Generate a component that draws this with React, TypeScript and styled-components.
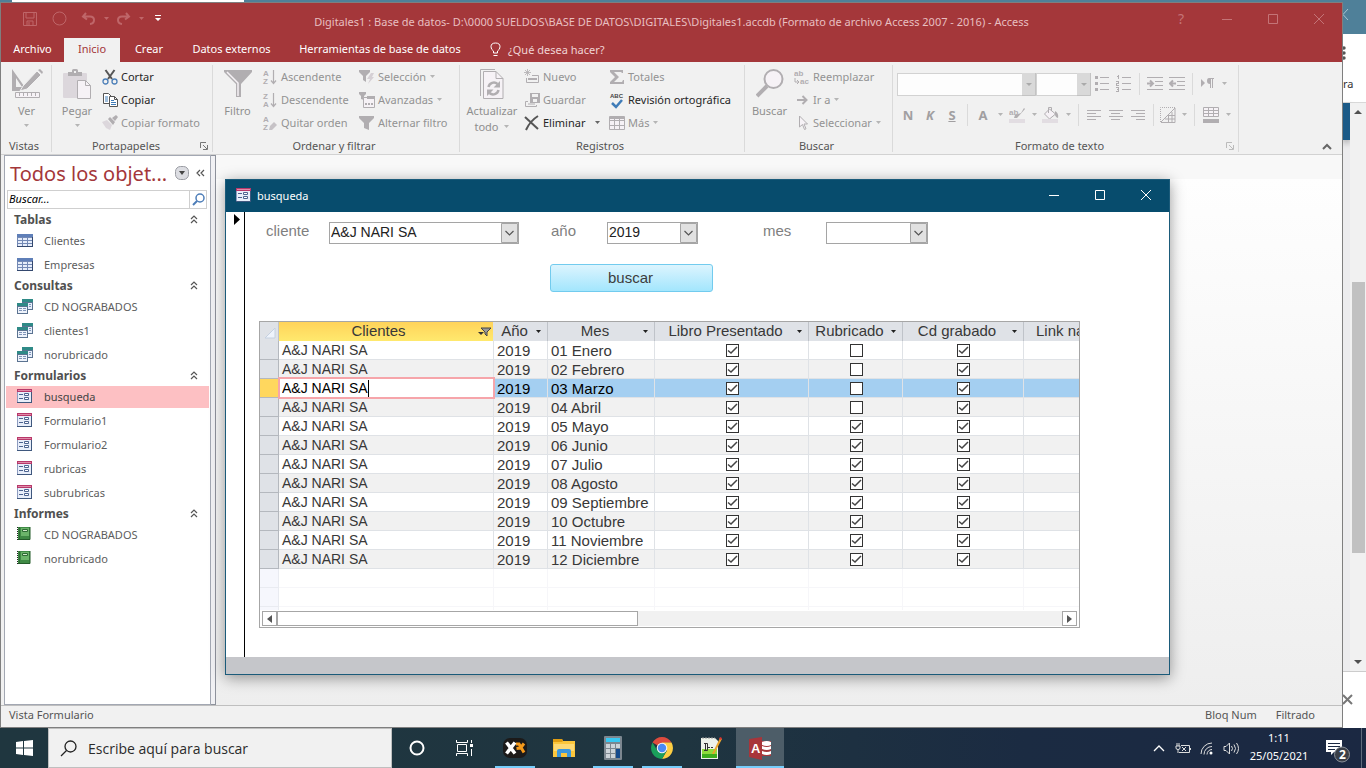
import React from "react";
import styled, { createGlobalStyle, css } from "styled-components";

const ui = '"Noto Sans", "Open Sans", sans-serif';
const arial = '"Liberation Sans", Arial, sans-serif';
const RED = "#a4373a";
const G = "#b1aeb1";

const Global = createGlobalStyle`
  *, *::before, *::after { box-sizing: border-box; }
  body { margin: 0; font-family: ${ui}; font-size: 11px; color: #262626; background: #f0f0f0; }
  button, input, select { font: inherit; color: inherit; margin: 0; padding: 0; border: 0; border-radius: 0; background: none; }
  svg { display: block; flex: none; }
  h2, ul { margin: 0; padding: 0; list-style: none; }
`;

/* ---------- shell ---------- */
const Screen = styled.div`
  min-height: 100vh;
  display: flex;
  flex-direction: column;
  overflow: hidden;
`;
const Upper = styled.div`
  flex: 1;
  display: flex;
`;
const Front = styled.div`
  flex: 1;
  min-width: 0;
  display: flex;
  flex-direction: column;
`;
const TabSliver = styled.div`
  height: 2px;
  background: #4f8099;
  padding-left: 12px;
  &::before {
    content: "";
    display: block;
    width: 232px;
    height: 2px;
    background: #fff;
  }
`;
const AccessWindow = styled.main`
  flex: 1;
  display: flex;
  flex-direction: column;
  border: 1px solid #7f7f7f;
  background: #f1f1f1;
`;
const Header = styled.header`
  background: ${RED};
  color: #fff;
`;
const TitleRow = styled.div`
  height: 35px;
  display: grid;
  grid-template-columns: 1fr auto 1fr;
  color: #c47477;
`;
const Quick = styled.div`
  display: flex;
  align-items: center;
  height: 31px;
  padding-left: 14px;
`;
const QuickButton = styled.button<{ $w: number; $bright?: boolean }>`
  width: ${(p) => p.$w}px;
  height: 24px;
  display: flex;
  align-items: center;
  justify-content: center;
  color: ${(p) => (p.$bright ? "#fff" : "#bf6669")};
`;
const Title = styled.div`
  line-height: 38px;
  color: #e8bfc0;
  white-space: nowrap;
`;
const Controls = styled.div`
  display: flex;
  justify-content: flex-end;
`;
const WinButton = styled.button`
  width: 46px;
  height: 31px;
  display: flex;
  align-items: center;
  justify-content: center;
  font-size: 14px;
`;
const Tabs = styled.nav`
  height: 24px;
  display: flex;
`;
const Tab = styled.button<{ $w: number; $active?: boolean }>`
  width: ${(p) => p.$w}px;
  padding-bottom: 2px;
  white-space: nowrap;
  line-height: 22px;
  ${(p) => p.$active && css`background: #f1f1f1; color: ${RED};`}
`;
const TellMe = styled.button`
  display: flex;
  align-items: center;
  gap: 7px;
  padding: 0 0 2px 15px;
  color: #f0d4d5;
`;

/* ---------- ribbon ---------- */
const Ribbon = styled.div`
  height: 93px;
  display: flex;
  border-bottom: 1px solid #d2d2d2;
  padding: 3px 0 2px;
`;
const Group = styled.section<{ $w: number }>`
  width: ${(p) => p.$w}px;
  flex: none;
  border-right: 1px solid #dadada;
  display: flex;
  flex-direction: column;
  justify-content: space-between;
`;
const GroupBody = styled.div`
  display: flex;
  height: 70px;
`;
const GroupFoot = styled.div`
  display: flex;
  align-items: center;
  height: 12px;
  line-height: 12px;
  padding-right: 4px;
  color: #555;
  span { flex: 1; text-align: center; white-space: nowrap; }
`;
const Large = styled.button<{ $w: number }>`
  width: ${(p) => p.$w}px;
  flex: none;
  display: flex;
  flex-direction: column;
  align-items: center;
  justify-content: flex-start;
  padding-top: 4px;
  color: #8f8f8f;
  line-height: 16px;
  > svg:first-child { margin-bottom: 4px; }
  > svg:not(:first-child) { margin-top: 5px; }
`;
const LargeLine = styled.span`
  display: flex;
  align-items: center;
  gap: 4px;
  white-space: nowrap;
`;
const Column = styled.div<{ $w: number }>`
  width: ${(p) => p.$w}px;
  flex: none;
`;
const Small = styled.button<{ $on?: boolean }>`
  display: flex;
  align-items: center;
  height: 23px;
  gap: 3px;
  white-space: nowrap;
  color: ${(p) => (p.$on ? "#262626" : "#939393")};
  > svg { margin-left: ${(p) => (p.$on ? 6 : 0)}px; }
`;
const IconSlot = styled.span`
  width: 16px;
  display: flex;
  justify-content: center;
`;
const Format = styled.div`
  padding: 6px 0 0 4px;
`;
const FormatRow = styled.div<{ $h: number }>`
  display: flex;
  align-items: center;
  height: ${(p) => p.$h}px;
`;
const Tool = styled.button<{ $w: number }>`
  width: ${(p) => p.$w}px;
  height: 22px;
  flex: none;
  display: flex;
  align-items: center;
  justify-content: center;
  padding-bottom: 1px;
  color: #a19fa1;
  font-size: 13px;
  font-weight: 700;
`;
const Sep = styled.span<{ $w: number }>`
  width: ${(p) => p.$w}px;
  height: 22px;
  display: flex;
  justify-content: center;
  &::before { content: ""; width: 1px; background: #dadada; }
`;
const Stack = styled.span<{ $w: number }>`
  width: ${(p) => p.$w}px;
  flex: none;
  display: grid;
  select, svg { grid-area: 1 / 1; }
  svg { justify-self: end; pointer-events: none; }
`;
const FontSelect = styled.select`
  appearance: none;
  width: 100%;
  height: 23px;
  background: #fdfdfd;
  border: 1px solid #d2d2d2;
`;
const Spring = styled.div`
  flex: 1;
  display: flex;
  align-items: flex-end;
  justify-content: flex-end;
  padding: 0 10px 1px 0;
`;

/* ---------- navigation pane ---------- */
const Body = styled.div`
  flex: 1;
  display: flex;
`;
const Pane = styled.aside`
  width: 207px;
  flex: none;
  margin-left: 3px;
  background: #fff;
  border: 1px solid #a3a8b3;
`;
const Splitter = styled.div`
  width: 5px;
  flex: none;
  border: 1px solid #8e929c;
  border-left: 0;
  background: #f1f1f4;
`;
const PaneHead = styled.div`
  height: 34px;
  display: flex;
  align-items: center;
  padding-left: 5px;
  color: ${RED};
  white-space: nowrap;
  h2 { flex: 1; font-size: 20px; font-weight: 400; }
  button { width: 19px; display: flex; justify-content: center; }
`;
const SearchBox = styled.div`
  margin: 0 3px 2px 2px;
  height: 19px;
  display: flex;
  border: 1px solid #cfcfcf;
  input {
    flex: 1;
    min-width: 0;
    padding: 0 0 2px 1px;
    font-style: italic;
    color: #000;
  }
  input::placeholder { color: #000; opacity: 1; }
  button { width: 17px; border-left: 1px solid #cfcfcf; display: flex; align-items: center; justify-content: center; }
`;
const NavHead = styled.button`
  width: 100%;
  height: 18px;
  display: flex;
  align-items: center;
  justify-content: space-between;
  padding: 0 12px 1px 9px;
  font-size: 12px;
  font-weight: 700;
  color: #505050;
`;
const NavItem = styled.li<{ $on?: boolean }>`
  height: 24px;
  padding: 1px;
  a {
    display: flex;
    align-items: center;
    gap: 10px;
    height: 22px;
    padding: 0 0 2px 11px;
    text-decoration: none;
    color: ${(p) => (p.$on ? "#444" : "#5d5d5d")};
    background: ${(p) => (p.$on ? "#fdc0c3" : "none")};
  }
  span { width: 17px; display: flex; }
`;

/* ---------- workspace and form window ---------- */
const Workspace = styled.div`
  flex: 1;
  min-width: 0;
  border-top: 24px solid #f8f8f8;
  background: linear-gradient(#fefefe, #eeeeee);
`;
const FormWindow = styled.section`
  margin: 0 172px 30px 9px;
  border: 1px solid #1b5b7a;
  background: #fff;
  box-shadow: 0 3px 14px rgba(0, 0, 0, 0.4);
`;
const FormTitle = styled.div`
  height: 32px;
  display: flex;
  align-items: center;
  padding: 0 0 2px 10px;
  background: #074c6d;
  color: #fff;
  > span { flex: 1; padding-left: 5px; }
`;
const FormBody = styled.div`
  display: flex;
  height: 445px;
`;
const RecordBar = styled.div`
  width: 19px;
  border-right: 1px solid #000;
  padding: 2px 0 0 8px;
`;
const FormArea = styled.form`
  flex: 1;
  min-width: 0;
  padding: 10px 89px 0 14px;
  font-family: ${arial};
  font-size: 15px;
`;
const Fields = styled.div`
  display: flex;
  padding-left: 7px;
  height: 22px;
  label { color: #7f7f7f; line-height: 18px; }
`;
const FieldLabel = styled.label<{ $w: number }>`
  width: ${(p) => p.$w}px;
  flex: none;
`;
const Combo = styled.select`
  appearance: none;
  width: 100%;
  height: 22px;
  padding: 0 18px 3px 1px;
  border: 1px solid #a5a5a5;
  background: #fff;
  color: #222;
  font-size: 14px;
`;
const Gap = styled.span<{ $w: number }>`
  width: ${(p) => p.$w}px;
  flex: 0 1 auto;
`;
const SearchButton = styled.button`
  display: block;
  width: 163px;
  height: 28px;
  margin: 20px 0 29px 291px;
  padding: 0 2px 2px 0;
  border: 1px solid #72cbee;
  border-radius: 3px;
  background: linear-gradient(#dcf4fe, #a3e6fd);
  color: #3c3c3c;
`;
const Sheet = styled.div`
  border: 1px solid #a6a6a6;
  height: 307px;
  display: flex;
  flex-direction: column;
`;
const SheetView = styled.div`
  height: 288px;
  overflow: hidden;
`;
const Table = styled.table`
  table-layout: fixed;
  width: 900px;
  border-collapse: separate;
  border-spacing: 0;
  color: #383838;
`;
const HeadCell = styled.th<{ $sel?: boolean }>`
  height: 19px;
  padding: 0;
  font-weight: 400;
  background: ${(p) => (p.$sel ? "linear-gradient(#ffd35a, #ffe96e)" : "#dfe2e7")};
  border-right: 1px solid ${(p) => (p.$sel ? "#dfe2e7" : "#bfc3c9")};
`;
const HeadInner = styled.div<{ $left?: boolean; $sel?: boolean }>`
  display: flex;
  align-items: center;
  height: 19px;
  line-height: 17px;
  padding-right: ${(p) => (p.$sel ? 2 : 5)}px;
  span {
    flex: 1;
    text-align: ${(p) => (p.$left ? "left" : "center")};
    padding: 0 0 2px ${(p) => (p.$left ? 12 : 0)}px;
    white-space: nowrap;
  }
`;
const Row = styled.tr<{ $kind: "odd" | "even" | "on" | "void" }>`
  background: ${(p) => ({ odd: "#fff", even: "#f1f1f1", on: "#a4cff1", void: "#fff" })[p.$kind]};
  color: ${(p) => (p.$kind === "on" ? "#000" : "#383838")};
  td {
    height: 19px;
    padding: 1px 2px 0 3px;
    line-height: 17px;
    white-space: nowrap;
    border-right: 1px solid ${(p) => (p.$kind === "void" ? "#f6f6f9" : "#dfe2e6")};
    border-bottom: 1px solid ${(p) => (p.$kind === "void" ? "#f6f6f9" : "#dfe2e6")};
  }
  td:nth-child(2) { font-size: 14px; }
  td:first-child {
    background: ${(p) => ({ odd: "#dfe2e7", even: "#dfe2e7", on: "#ffd75e", void: "#f6f7fd" })[p.$kind]};
    border-color: ${(p) => (p.$kind === "void" ? "#e9ebf1" : "#b4b8be")};
  }
`;
const Edit = styled.div`
  height: 22px;
  margin: -3px -4px -2px -4px;
  border: 2px solid #f6a5aa;
  background: #fff;
  display: flex;
  align-items: center;
  padding-left: 2px;
  position: relative;
  input { field-sizing: content; line-height: 17px; height: 17px; outline: none; }
  &::after { content: ""; width: 1px; height: 17px; background: #000; }
`;
const Tick = styled.span`
  display: grid;
  width: 13px;
  height: 13px;
  margin: 0 auto;
  input { grid-area: 1 / 1; appearance: none; width: 13px; height: 13px; border: 1px solid #333; background: #fff; }
  svg { grid-area: 1 / 1; pointer-events: none; z-index: 1; }
`;
const HScroll = styled.div`
  flex: 1;
  display: flex;
  padding: 1px 2px;
  button { width: 15px; height: 15px; border: 1px solid #a6a6a6; background: #fff; display: flex; align-items: center; justify-content: center; }
`;
const HTrack = styled.div`
  flex: 1;
  height: 15px;
  background: #f1f1f1;
  &::before { content: ""; display: block; width: 46%; height: 15px; background: #fff; border: 1px solid #a6a6a6; }
`;
const FormFoot = styled.div`
  height: 17px;
  background: #c5c6ca;
`;
const Status = styled.footer`
  height: 22px;
  display: flex;
  align-items: center;
  gap: 19px;
  padding: 0 27px 4px 8px;
  border-top: 1px solid #bfbfbf;
  color: #555;
  span:first-child { flex: 1; }
`;

/* ---------- browser behind, at the right ---------- */
const Behind = styled.aside`
  width: 23px;
  flex: none;
  display: flex;
  flex-direction: column;
  overflow: hidden;
  background: #fff;
  color: #333;
`;
const BehindTop = styled.div`
  height: 34px;
  background: #4f8099;
  padding-top: 9px;
`;
const BehindBar = styled.div`
  height: 69px;
  border-bottom: 1px solid #d8d8d8;
  padding-top: 12px;
  line-height: 16px;
  svg { margin-bottom: 16px; }
`;
const BehindPage = styled.div`
  flex: 1;
  display: flex;
  background: #ececee;
  border-bottom: 1px solid #ccc;
`;
const BehindBlue = styled.div`
  width: 7px;
  height: 37px;
  background: #1b5a87;
  box-shadow: 0 3px 6px rgba(0, 0, 0, 0.3);
`;
const VScroll = styled.div`
  flex: 1;
  background: #f1f1f1;
  display: flex;
  flex-direction: column;
  align-items: center;
  justify-content: space-between;
  padding: 7px 0;
`;
const VThumb = styled.div`
  width: 13px;
  height: 271px;
  margin-top: 60px;
  background: #c1c1c1;
`;
const BehindFoot = styled.div`
  height: 56px;
  padding-top: 22px;
`;

/* ---------- taskbar ---------- */
const Taskbar = styled.footer`
  height: 40px;
  display: flex;
  background: linear-gradient(90deg, #1f363f, #1f3540 50%, #1b2b42 75%, #1b2842);
  color: #fff;
`;
const TaskButton = styled.button<{ $run?: boolean; $on?: boolean }>`
  width: 48px;
  height: 40px;
  flex: none;
  display: flex;
  align-items: center;
  justify-content: center;
  background: ${(p) => (p.$on ? "#4d5d68" : "none")};
  ${(p) => p.$run && css`
    background-image: linear-gradient(#76cdfb, #76cdfb);
    background-size: ${p.$on ? 48 : 40}px 2px;
    background-repeat: no-repeat;
    background-position: center bottom;
  `}
`;
const TaskSearch = styled.label`
  width: 344px;
  display: flex;
  align-items: center;
  gap: 11px;
  padding-left: 11px;
  border: 1px solid #bfbfbf;
  background: #f1f1f1;
  color: #2b2b2b;
  input { flex: 1; min-width: 0; font-family: "Open Sans", sans-serif; font-size: 14px; }
  input::placeholder { color: #2b2b2b; opacity: 1; }
`;
const Apps = styled.div`
  display: flex;
  gap: 1px;
  padding-left: 1px;
`;
const Tray = styled.div`
  flex: 1;
  display: flex;
  align-items: center;
  justify-content: flex-end;
`;
const TrayButton = styled.button`
  width: 24px;
  height: 40px;
  display: flex;
  align-items: center;
  justify-content: center;
`;
const Clock = styled.button`
  width: 72px;
  line-height: 18px;
  padding-bottom: 2px;
  text-align: center;
`;
const Notice = styled.button`
  width: 46px;
  height: 40px;
  display: flex;
  align-items: center;
  justify-content: center;
  padding-top: 6px;
`;
const ShowDesktop = styled.button`
  width: 5px;
  height: 40px;
  border-left: 1px solid #5f6b7c;
`;

/* ---------- icons ---------- */
const Caret = ({ c = "#b5b5b5" }: { c?: string }) => (
  <svg width="7" height="4" viewBox="0 0 7 4"><path d="M1 0h5L3.500 3z" fill={c} /></svg>
);
const WinGlyph = ({ kind }: { kind: "min" | "max" | "close" }) => (
  <svg width="12" height="12" viewBox="0 0 12 12" fill="none" stroke="currentColor">
    {kind === "min" && <path d="M1 6.500h10" />}
    {kind === "max" && <path d="M1.500 1.500h9v9h-9z" />}
    {kind === "close" && <path d="M1 1l10 10M11 1L1 11" />}
  </svg>
);
const VerIcon = () => (
  <svg width="32" height="30" viewBox="0 0 32 30">
    <path d="M1 0v22h8l4-5z M5 9v9h6z" fill={G} fillRule="evenodd" />
    <path d="M12 17L26 2l4 4L16 20l-7 2z" fill={G} stroke="#f1f1f1" />
    <path d="M27 1l2-1 3 3-1 2z" fill={G} />
    <path d="M4.500 23.500h24v5h-24z" fill="#f6f2f6" stroke={G} />
    <path d="M8.500 24v3M12.500 24v3M16.500 24v3M20.500 24v3M24.500 24v3" stroke={G} />
  </svg>
);
const PasteIcon = () => (
  <svg width="28" height="30" viewBox="0 0 28 30">
    <rect x="0" y="4" width="24" height="25" rx="1" fill="#dcd7dc" />
    <path d="M5 3h4V1.500Q9 0 10.500 0h3Q15 0 15 1.500V3h4v4H5z" fill={G} />
    <rect x="11" y="2" width="2" height="2" fill="#f1f1f1" />
    <path d="M14.500 11.500h8l5 5v13h-13z" fill="#f6f2f6" stroke={G} />
    <path d="M22.500 11.500v5h5" fill="none" stroke={G} />
  </svg>
);
const CutIcon = () => (
  <svg width="16" height="16" viewBox="0 0 16 16" fill="none">
    <path d="M3.500 1L10 10M12.500 1L6 10" stroke="#555" strokeWidth="2" />
    <circle cx="3.500" cy="12.500" r="2.500" stroke="#4c7fb8" strokeWidth="1.300" />
    <circle cx="12.500" cy="12.500" r="2.500" stroke="#4c7fb8" strokeWidth="1.300" />
  </svg>
);
const CopyIcon = () => (
  <svg width="16" height="16" viewBox="0 0 16 16" fill="#fff" stroke="#555">
    <path d="M1.500 1.500h5l3 3v7h-8z" />
    <path d="M3 5h3M3 7h3M3 9h3" stroke="#3f7cb8" />
    <path d="M7.500 4.500h5l3 3v7h-8z" />
    <path d="M12.500 4.500v3h3" fill="none" />
    <path d="M9 8.500h3M9 10.500h5M9 12.500h5" stroke="#3f7cb8" />
  </svg>
);
const BrushIcon = () => (
  <svg width="16" height="16" viewBox="0 0 16 16">
    <path d="M0 7l5-2 5 5-2 5-4-2z" fill="#dcd7dc" />
    <path d="M6 4l2-2 5 5-2 3z" fill={G} />
    <path d="M10 3l4-3 2 2-3 4z" fill={G} />
  </svg>
);
const Funnel = ({ big }: { big?: boolean }) =>
  big ? (
    <svg width="28" height="30" viewBox="0 0 28 30">
      <path d="M0 1h28v2L17 15v13h-5V15L0 3z" fill={G} />
      <path d="M3 3l11 11v13" stroke="#f6f2f6" fill="none" strokeWidth="1.500" />
    </svg>
  ) : (
    <svg width="16" height="16" viewBox="0 0 16 16"><path d="M0 1h15v2L10 8v7l-5-2V8L0 3z" fill={G} /></svg>
  );
const SortIcon = ({ a, b, clear }: { a: string; b: string; clear?: boolean }) => (
  <svg width="16" height="18" viewBox="0 0 16 18">
    <text x="1" y="8" fontSize="8" fontWeight="700" fontFamily="Liberation Sans" fill={G}>{a}</text>
    <text x="1" y="16" fontSize="8" fontWeight="700" fontFamily="Liberation Sans" fill={G}>{b}</text>
    {clear ? (
      <path d="M7 16l1-4 4-4 3 3-5 5z" fill="#c6c2c6" />
    ) : (
      <path d="M11.500 2v13M9 12.500l2.500 3 2.500-3" stroke={G} strokeWidth="1.200" fill="none" />
    )}
  </svg>
);
const SelectionIcon = () => (
  <svg width="16" height="16" viewBox="0 0 16 16">
    <path d="M0 1h11v2L7 7v6l-3-2V7L0 3z" fill={G} />
    <path d="M12 4h3l-2 4h2l-6 7 2-5H8z" fill="#d5d0d5" />
  </svg>
);
const AdvancedIcon = () => (
  <svg width="16" height="16" viewBox="0 0 16 16">
    <path d="M0 0h7v2L5 4v4L2 7V4L0 2z" fill={G} />
    <path d="M4.500 5.500h11v10h-11z" fill="#f6f2f6" stroke={G} />
    <path d="M8 4h8v3H8z" fill={G} />
    <path d="M6 11h2v2H6zM9 11h2v2H9zM12 11h2v2h-2z" fill={G} />
  </svg>
);
const RefreshIcon = () => (
  <svg width="26" height="30" viewBox="0 0 26 30" fill="none" stroke={G}>
    <path d="M1.500 27V.500H16" />
    <path d="M4.500 2.500H17l7 7v20H4.500z" fill="#f6f2f6" />
    <path d="M17 2.500v7h7" />
    <path d="M9.500 18a5.500 5.500 0 0 1 9-3M19.500 21a5.500 5.500 0 0 1-9 3" strokeWidth="2.500" />
    <path d="M21 12v6.500h-6.500zM8 27v-6.500h6.500z" fill={G} stroke="none" />
  </svg>
);
const NewIcon = () => (
  <svg width="16" height="16" viewBox="0 0 16 16" stroke={G} fill="none">
    <path d="M3.500 0v7M0 3.500h7M1 1l5 5M6 1L1 6" strokeWidth=".8" />
    <path d="M8 6.500h6.500v7h-12V9" /><path d="M4 10h9" strokeWidth="2" />
  </svg>
);
const SaveIcon = () => (
  <svg width="16" height="16" viewBox="0 0 16 16">
    <path d="M6 1h10v10H6z" fill={G} /><path d="M8 2h6v3H8zM9 7h4v3H9z" fill="#f1f1f1" />
    <path d="M4 9.500H1.500v5h11V13M4 12h7" stroke={G} fill="none" />
  </svg>
);
const DeleteIcon = () => (
  <svg width="16" height="16" viewBox="0 0 16 16" fill="none" stroke="#555">
    <path d="M1 2l13 12" strokeWidth="2" /><path d="M14 1Q6 6 2 15" strokeWidth="2" />
  </svg>
);
const SumIcon = () => (
  <svg width="16" height="16" viewBox="0 0 16 16"><path d="M1 1h13v3h-1l-1-1H5l5 5-5 5h8l1-2h1v4H1v-2l5-5-5-5z" fill={G} /></svg>
);
const SpellIcon = () => (
  <svg width="16" height="18" viewBox="0 0 16 18">
    <text x="1" y="7" fontSize="6" fontWeight="700" fontFamily="Liberation Sans" fill="#444">ABC</text>
    <path d="M3 12l4 4 6-7" fill="none" stroke="#3f7cb8" strokeWidth="2.500" />
  </svg>
);
const MoreIcon = () => (
  <svg width="16" height="16" viewBox="0 0 16 16" fill="#f6f2f6" stroke={G}>
    <path d="M.500 1.500h15v13H.500zM.500 5.500h15v5H.500zM5.500 1.500v13M10.500 1.500v13" />
    <path d="M1 2h14v2H1z" fill={G} stroke="none" />
  </svg>
);
const FindIcon = () => (
  <svg width="28" height="30" viewBox="0 0 28 30" fill="none" stroke={G}>
    <circle cx="17.500" cy="10" r="9" strokeWidth="2" fill="#f6f2f6" /><path d="M11 17L1 27" strokeWidth="4" />
  </svg>
);
const ReplaceIcon = () => (
  <svg width="16" height="18" viewBox="0 0 16 18" fontFamily="Liberation Sans" fontWeight="700" fontSize="8">
    <text x="0" y="8" fill={G}>ab</text><text x="6" y="16" fill={G}>ac</text>
    <path d="M1 10v4h3M3 12l2 2-2 2" stroke={G} fill="none" />
  </svg>
);
const GoIcon = () => (
  <svg width="16" height="16" viewBox="0 0 16 16" fill="none" stroke={G} strokeWidth="2"><path d="M3 8h9M8.500 4l4 4-4 4" /></svg>
);
const CursorIcon = () => (
  <svg width="16" height="16" viewBox="0 0 16 16"><path d="M5.500 1v11l3-2.500 2 5 1.500-.7-2-4.800h3.500z" fill="#f6f2f6" stroke={G} /></svg>
);
const LauncherIcon = ({ c = "#777" }: { c?: string }) => (
  <svg width="8" height="8" viewBox="0 0 8 8" fill="none" stroke={c}><path d="M.500 6V.500H6M3 3l4 4M7.500 3v4.500H3" /></svg>
);
const BulletIcon = ({ num }: { num?: boolean }) => (
  <svg width="16" height="17" viewBox="0 0 16 17" fill={G}>
    <path d="M6 2h9v1H6zM6 8h9v1H6zM6 14h9v1H6z" />
    {num ? (
      <path d="M1 1h1V0h1v4H2V2H1zM0 7V6h3v3H1v1h2v1H0V8h2V7zM0 12h3v5H0v-1h2v-1H1v-1h1v-1H0z" />
    ) : (
      <path d="M1 1h3v3H1zM1 7h3v3H1zM1 13h3v3H1z" />
    )}
  </svg>
);
const IndentIcon = ({ out }: { out?: boolean }) => (
  <svg width="16" height="15" viewBox="0 0 16 15" stroke={G} fill="none">
    <path d="M0 1.500h16M8 5.500h8M8 9.500h8M0 13.500h16" />
    <path d={out ? "M7 7.500H1M4 4.500l-3 3 3 3" : "M0 7.500h6M3 4.500l3 3-3 3"} strokeWidth="2" />
  </svg>
);
const ParaIcon = () => (
  <svg width="13" height="11" viewBox="0 0 13 11" fill={G}><path d="M0 1l4 4-4 4zM8 0h5v1h-1v9h-1V1h-1v9H9V6Q6 6 6 3t2-3z" /></svg>
);
const MarkIcon = () => (
  <svg width="16" height="16" viewBox="0 0 16 16">
    <text x="0" y="8" fontSize="8" fontWeight="700" fontFamily="Liberation Sans" fill={G}>ab</text>
    <path d="M15 1l1 1-8 9H5l1-3 6-2z" fill={G} /><path d="M0 12h16v4H0z" fill="#e2dde2" />
  </svg>
);
const BucketIcon = () => (
  <svg width="18" height="16" viewBox="0 0 18 16">
    <path d="M2.500 7l5-5 6 5-6 5z" fill="#f6f2f6" stroke={G} /><path d="M6.500 6V.500h3V4" fill="none" stroke={G} />
    <path d="M13 4q4 2 3 7-3-1-3-4z" fill={G} /><path d="M0 12h16v4H0z" fill="#e2dde2" />
  </svg>
);
const AlignIcon = ({ k }: { k: 0 | 1 | 2 }) => (
  <svg width="14" height="12" viewBox="0 0 14 12" fill={G}>
    <path d="M0 1h14v1H0zM0 7h14v1H0z" /><rect x={[0, 2, 5][k]} y="4" width="9" height="1" /><rect x={[0, 2, 5][k]} y="10" width="9" height="1" />
  </svg>
);
const GridlinesIcon = () => (
  <svg width="16" height="16" viewBox="0 0 16 16" fill="none" stroke={G}>
    <path d="M.500 15V.500H15" strokeDasharray="1 1" /><path d="M1 15L15 1v14.500H1M8.500 8v7M12 5v10M8 8.500h7M5 12h10" />
  </svg>
);
const AltRowIcon = () => (
  <svg width="16" height="16" viewBox="0 0 16 16" fill="#f6f2f6" stroke={G}>
    <path d="M.500.500h15v9H.500zM.500 3.500h15M.500 6.500h15M5.500.500v9M10.500.500v9" /><path d="M0 12h16v4H0z" fill={G} stroke="none" />
  </svg>
);
const FontArrow = () => (
  <svg width="14" height="23" viewBox="0 0 14 23"><path d="M0 0h14v23H0z" fill="#d9d9d9" /><path d="M13.500 0v22.500H0" stroke="#c3c3c3" fill="none" /><path d="M4 10h6l-3 3z" fill="#aaa" /></svg>
);
const ComboArrow = () => (
  <svg width="18" height="22" viewBox="0 0 18 22"><path d="M.500 1.500h16v19H.500z" fill="#e1e1e1" stroke="#a5a5a5" /><path d="M17.500 0v22" stroke="#a5a5a5" /><path d="M4.500 9l4 4 4-4" fill="none" stroke="#555" strokeWidth="1.200" /></svg>
);
const NavTable = () => (
  <svg width="16" height="13" viewBox="0 0 16 13"><rect width="16" height="13" fill="#7389b5" /><path d="M0 0h16v3H0z" fill="#5f7fb8" /><path d="M15 3h1v10H0v-1h15z" fill="#34486e" />
    <path d="M1 4h4v2H1zM6 4h4v2H6zM11 4h4v2h-4zM1 7h4v2H1zM6 7h4v2H6zM11 7h4v2h-4zM1 10h4v2H1zM6 10h4v2H6zM11 10h4v2h-4z" fill="#e6edfa" /></svg>
);
const NavQuery = () => (
  <svg width="16" height="15" viewBox="0 0 16 15">
    <path d="M5 0h11v11H5z" fill="#5b7391" /><path d="M6 4h9v6H6z" fill="#e6eefa" /><path d="M5 0h11v3H5z" fill="#2f8a87" />
    <path d="M12 5h2v1h-2zM12 7h2v1h-2z" fill="#7f94b8" />
    <path d="M0 4h11v11H0z" fill="#5b7391" /><path d="M1 8h9v6H1z" fill="#eef3fb" /><path d="M0 4h11v3H0z" fill="#2f8a87" />
    <path d="M2 9h3v1H2zM6 9h3v1H6zM2 11h3v1H2zM6 11h3v1H6z" fill="#7f94b8" />
  </svg>
);
const NavForm = () => (
  <svg width="16" height="14" viewBox="0 0 16 14"><path d="M0 0h15v14H0z" fill="#3f587e" /><path d="M0 0h14v13H0z" fill="#8d9cc0" /><path d="M1 3h13v10H1z" fill="#e8eefa" /><path d="M0 0h15v3H0z" fill="#b8386a" /><path d="M1 1h13v1H1z" fill="#e08aa8" />
    <path d="M2 5.500h4M2 9.500h4M7.500 4.500h4v2h-4zM7.500 8.500h4v2h-4z" fill="#fff" stroke="#4d6490" /></svg>
);
const NavReport = () => (
  <svg width="16" height="14" viewBox="0 0 16 14"><path d="M1 0h12v13H1z" fill="#3f8a45" /><path d="M4 1h8v8H4z" fill="#6bb56a" /><path d="M5.500 2.500h5v2h-5z" fill="#cfe8c8" stroke="#2e6b35" />
    <path d="M.500 0v13" stroke="#222" strokeDasharray="1 1" /><path d="M2.500 0v13" stroke="#2e6b35" /><path d="M1 12.500h12V0" fill="none" stroke="#245c2a" /></svg>
);
const DoubleUp = () => (
  <svg width="8" height="9" viewBox="0 0 8 9" fill="none" stroke="#555" strokeWidth="1.200"><path d="M1 4l3-3 3 3M1 8l3-3 3 3" /></svg>
);

/* ---------- data ---------- */
const navGroups = [
  { name: "Tablas", icon: NavTable, items: ["Clientes", "Empresas"] },
  { name: "Consultas", icon: NavQuery, items: ["CD NOGRABADOS", "clientes1", "norubricado"] },
  { name: "Formularios", icon: NavForm, items: ["busqueda", "Formulario1", "Formulario2", "rubricas", "subrubricas"] },
  { name: "Informes", icon: NavReport, items: ["CD NOGRABADOS", "norubricado"] },
];
const months = ["Enero", "Febrero", "Marzo", "Abril", "Mayo", "Junio", "Julio", "Agosto", "Septiembre", "Octubre", "Noviembre", "Diciembre"];
const heads = ["Año", "Mes", "Libro Presentado", "Rubricado", "Cd grabado"];
const columnWidths = [19, 215, 54, 107, 154, 94, 121, 136];

const Check = ({ on, label }: { on: boolean; label: string }) => (
  <Tick>
    <input type="checkbox" defaultChecked={on} aria-label={label} />
    {on && <svg width="13" height="13" viewBox="0 0 13 13" fill="none" stroke="#444" strokeWidth="1.500"><path d="M2 6.500L5 9l6-6" /></svg>}
  </Tick>
);
const Cmd = ({ icon, children, on, menu }: { icon: React.ReactNode; children: string; on?: boolean; menu?: boolean }) => (
  <Small $on={on} type="button"><IconSlot>{icon}</IconSlot>{children}{menu && <Caret c={on ? "#666" : undefined} />}</Small>
);

export default function App() {
  return (
    <Screen>
      <Global />
      <Upper>
        <Front>
          <TabSliver />
          <AccessWindow>
            <Header>
              <TitleRow>
                <Quick>
                  <QuickButton $w={30} aria-label="Guardar"><svg width="14" height="14" viewBox="0 0 14 14" fill="none" stroke="currentColor"><path d="M.500.500h13v13H.500zM3 1v5h8V1M4 13V9h6v4M6 10v3" /></svg></QuickButton>
                  <QuickButton $w={29} aria-label="Repetir"><svg width="15" height="15" viewBox="0 0 15 15" fill="none" stroke="currentColor"><circle cx="7.500" cy="7.500" r="6.500" /></svg></QuickButton>
                  <QuickButton $w={28} aria-label="Deshacer"><svg width="14" height="13" viewBox="0 0 14 13" fill="none" stroke="currentColor" strokeWidth="2"><path d="M5 1L2 4.500l4 3M2 4.500h7q4 0 4 3.500t-4 4" /></svg></QuickButton>
                  <QuickButton $w={8} aria-label="Lista deshacer"><Caret c="#bf6669" /></QuickButton>
                  <QuickButton $w={27} aria-label="Rehacer"><svg width="14" height="13" viewBox="0 0 14 13" fill="none" stroke="currentColor" strokeWidth="2"><path d="M9 1l3 3.500-4 3M12 4.500H5Q1 4.500 1 8t4 4" /></svg></QuickButton>
                  <QuickButton $w={8} aria-label="Lista rehacer"><Caret c="#bf6669" /></QuickButton>
                  <QuickButton $w={26} $bright aria-label="Personalizar"><svg width="6" height="7" viewBox="0 0 6 7" fill="currentColor"><path d="M0 0h6v1H0zM0 3h6L3 6z" /></svg></QuickButton>
                </Quick>
                <Title>Digitales1 : Base de datos- D:\0000 SUELDOS\BASE DE DATOS\DIGITALES\Digitales1.accdb (Formato de archivo Access 2007 - 2016) - Access</Title>
                <Controls>
                  <WinButton aria-label="Ayuda">?</WinButton>
                  <WinButton aria-label="Minimizar"><WinGlyph kind="min" /></WinButton>
                  <WinButton aria-label="Maximizar"><WinGlyph kind="max" /></WinButton>
                  <WinButton aria-label="Cerrar"><WinGlyph kind="close" /></WinButton>
                </Controls>
              </TitleRow>
              <Tabs>
                <Tab $w={63}>Archivo</Tab>
                <Tab $w={56} $active>Inicio</Tab>
                <Tab $w={58}>Crear</Tab>
                <Tab $w={107}>Datos externos</Tab>
                <Tab $w={190}>Herramientas de base de datos</Tab>
                <TellMe>
                  <svg width="11" height="15" viewBox="0 0 11 15" fill="none" stroke="#fff"><path d="M3.500 11V9Q1 7.500 1 4.800 1 1 5.500 1T10 4.800Q10 7.500 7.500 9v2zM3.500 13.500h4" /></svg>
                  ¿Qué desea hacer?
                </TellMe>
              </Tabs>
            </Header>

            <Ribbon>
              <Group $w={51}>
                <GroupBody><Large $w={51}><VerIcon />Ver<Caret /></Large></GroupBody>
                <GroupFoot><span>Vistas</span></GroupFoot>
              </Group>
              <Group $w={161}>
                <GroupBody>
                  <Large $w={50}><PasteIcon />Pegar<Caret /></Large>
                  <Column $w={110}>
                    <Cmd on icon={<CutIcon />}>Cortar</Cmd>
                    <Cmd on icon={<CopyIcon />}>Copiar</Cmd>
                    <Cmd icon={<BrushIcon />}>Copiar formato</Cmd>
                  </Column>
                </GroupBody>
                <GroupFoot><span>Portapapeles</span><LauncherIcon /></GroupFoot>
              </Group>
              <Group $w={247}>
                <GroupBody>
                  <Large $w={49}><Funnel big />Filtro</Large>
                  <Column $w={97}>
                    <Cmd icon={<SortIcon a="A" b="Z" />}>Ascendente</Cmd>
                    <Cmd icon={<SortIcon a="Z" b="A" />}>Descendente</Cmd>
                    <Cmd icon={<SortIcon a="A" b="Z" clear />}>Quitar orden</Cmd>
                  </Column>
                  <Column $w={100}>
                    <Cmd menu icon={<SelectionIcon />}>Selección</Cmd>
                    <Cmd menu icon={<AdvancedIcon />}>Avanzadas</Cmd>
                    <Cmd icon={<Funnel />}>Alternar filtro</Cmd>
                  </Column>
                </GroupBody>
                <GroupFoot><span>Ordenar y filtrar</span></GroupFoot>
              </Group>
              <Group $w={285}>
                <GroupBody>
                  <Large $w={64}><RefreshIcon />Actualizar<LargeLine>todo <Caret /></LargeLine></Large>
                  <Column $w={85}>
                    <Cmd icon={<NewIcon />}>Nuevo</Cmd>
                    <Cmd icon={<SaveIcon />}>Guardar</Cmd>
                    <Cmd on menu icon={<DeleteIcon />}>Eliminar</Cmd>
                  </Column>
                  <Column $w={130}>
                    <Cmd icon={<SumIcon />}>Totales</Cmd>
                    <Cmd on icon={<SpellIcon />}>Revisión ortográfica</Cmd>
                    <Cmd menu icon={<MoreIcon />}>Más</Cmd>
                  </Column>
                </GroupBody>
                <GroupFoot><span>Registros</span></GroupFoot>
              </Group>
              <Group $w={148}>
                <GroupBody>
                  <Large $w={49}><FindIcon />Buscar</Large>
                  <Column $w={98}>
                    <Cmd icon={<ReplaceIcon />}>Reemplazar</Cmd>
                    <Cmd menu icon={<GoIcon />}>Ir a</Cmd>
                    <Cmd menu icon={<CursorIcon />}>Seleccionar</Cmd>
                  </Column>
                </GroupBody>
                <GroupFoot><span>Buscar</span></GroupFoot>
              </Group>
              <Group $w={346}>
                <Format>
                  <FormatRow $h={26}>
                    <Stack $w={139}><FontSelect aria-label="Fuente" /><FontArrow /></Stack>
                    <Stack $w={55}><FontSelect aria-label="Tamaño" /><FontArrow /></Stack>
                    <Tool $w={22} aria-label="Viñetas"><BulletIcon /></Tool>
                    <Tool $w={22} aria-label="Numeración"><BulletIcon num /></Tool>
                    <Sep $w={9} />
                    <Tool $w={22} aria-label="Aumentar sangría"><IndentIcon /></Tool>
                    <Tool $w={22} aria-label="Disminuir sangría"><IndentIcon out /></Tool>
                    <Sep $w={9} />
                    <Tool $w={20} aria-label="Dirección"><ParaIcon /></Tool>
                    <Tool $w={14} aria-label="Más direcciones"><Caret /></Tool>
                  </FormatRow>
                  <FormatRow $h={36}>
                    <Tool $w={22}>N</Tool>
                    <Tool $w={22}><i>K</i></Tool>
                    <Tool $w={22}><u>S</u></Tool>
                    <Sep $w={8} />
                    <Tool $w={24}>A</Tool>
                    <Tool $w={10} aria-label="Más colores"><Caret /></Tool>
                    <Tool $w={24} aria-label="Resaltado"><MarkIcon /></Tool>
                    <Tool $w={10} aria-label="Más resaltados"><Caret /></Tool>
                    <Tool $w={24} aria-label="Fondo"><BucketIcon /></Tool>
                    <Tool $w={10} aria-label="Más fondos"><Caret /></Tool>
                    <Sep $w={10} />
                    <Tool $w={22} aria-label="Izquierda"><AlignIcon k={0} /></Tool>
                    <Tool $w={22} aria-label="Centrar"><AlignIcon k={1} /></Tool>
                    <Tool $w={22} aria-label="Derecha"><AlignIcon k={2} /></Tool>
                    <Sep $w={8} />
                    <Tool $w={22} aria-label="Líneas"><GridlinesIcon /></Tool>
                    <Tool $w={10} aria-label="Más líneas"><Caret /></Tool>
                    <Sep $w={10} />
                    <Tool $w={24} aria-label="Color de fila"><AltRowIcon /></Tool>
                    <Tool $w={10} aria-label="Más filas"><Caret /></Tool>
                  </FormatRow>
                </Format>
                <GroupFoot><span>Formato de texto</span><LauncherIcon c="#bbb" /></GroupFoot>
              </Group>
              <Spring>
                <button aria-label="Contraer cinta"><svg width="10" height="8" viewBox="0 0 10 8" fill="none" stroke="#666" strokeWidth="2"><path d="M1 6l4-4 4 4" /></svg></button>
              </Spring>
            </Ribbon>

            <Body>
              <Pane>
                <PaneHead>
                  <h2>Todos los objet...</h2>
                  <button aria-label="Menú"><svg width="14" height="14" viewBox="0 0 14 14"><rect x=".5" y=".5" width="13" height="13" rx="5" fill="#dcdde2" stroke="#9a9ca3" /><path d="M4 5h6l-3 4z" fill="#444" /></svg></button>
                  <button aria-label="Contraer panel"><svg width="9" height="8" viewBox="0 0 9 8" fill="none" stroke="#555" strokeWidth="1.200"><path d="M4 1L1 4l3 3M8 1L5 4l3 3" /></svg></button>
                </PaneHead>
                <SearchBox>
                  <input placeholder="Buscar..." aria-label="Buscar objetos" />
                  <button aria-label="Buscar"><svg width="13" height="13" viewBox="0 0 13 13" fill="none" stroke="#4d7db8"><circle cx="8" cy="5" r="4" strokeWidth="1.500" /><path d="M5 8l-4 4" strokeWidth="2" /></svg></button>
                </SearchBox>
                {navGroups.map(({ name, icon: Icon, items }) => (
                  <section key={name}>
                    <NavHead>{name}<DoubleUp /></NavHead>
                    <ul>
                      {items.map((item) => (
                        <NavItem key={item} $on={item === "busqueda"}><a href="#"><span><Icon /></span>{item}</a></NavItem>
                      ))}
                    </ul>
                  </section>
                ))}
              </Pane>
              <Splitter />
              <Workspace>
                <FormWindow>
                  <FormTitle>
                    <NavForm /><span>busqueda</span>
                    <WinButton aria-label="Minimizar"><WinGlyph kind="min" /></WinButton>
                    <WinButton aria-label="Maximizar"><WinGlyph kind="max" /></WinButton>
                    <WinButton aria-label="Cerrar"><WinGlyph kind="close" /></WinButton>
                  </FormTitle>
                  <FormBody>
                    <RecordBar><svg width="6" height="11" viewBox="0 0 6 11"><path d="M0 0l6 5.500L0 11z" /></svg></RecordBar>
                    <FormArea onSubmit={(e) => e.preventDefault()}>
                      <Fields>
                        <FieldLabel $w={63} htmlFor="cliente">cliente</FieldLabel>
                        <Stack $w={190}><Combo id="cliente"><option>A&amp;J NARI SA</option></Combo><ComboArrow /></Stack>
                        <Gap $w={32} />
                        <FieldLabel $w={56} htmlFor="anio">año</FieldLabel>
                        <Stack $w={91}><Combo id="anio"><option>2019</option></Combo><ComboArrow /></Stack>
                        <Gap $w={65} />
                        <FieldLabel $w={63} htmlFor="mes">mes</FieldLabel>
                        <Stack $w={102}><Combo id="mes"><option></option></Combo><ComboArrow /></Stack>
                      </Fields>
                      <SearchButton>buscar</SearchButton>
                      <Sheet>
                        <SheetView>
                          <Table>
                            <colgroup>{columnWidths.map((w, i) => <col key={i} width={w} />)}</colgroup>
                            <thead>
                              <tr>
                                <HeadCell aria-label="Seleccionar todo"><svg width="18" height="18" viewBox="0 0 18 18"><path d="M15 5v10H5z" fill="#eef3fb" stroke="#c5d0e0" /></svg></HeadCell>
                                <HeadCell $sel><HeadInner $sel><span>Clientes</span><svg width="13" height="10" viewBox="0 0 13 10"><path d="M0 5h6L3 8z" fill="#333" /><path d="M3 1h10L9 5v4L7 7V5z" fill="#999" stroke="#444" /></svg></HeadInner></HeadCell>
                                {heads.map((h) => (
                                  <HeadCell key={h}><HeadInner><span>{h}</span><Caret c="#222" /></HeadInner></HeadCell>
                                ))}
                                <HeadCell><HeadInner $left><span>Link na</span></HeadInner></HeadCell>
                              </tr>
                            </thead>
                            <tbody>
                              {months.map((m, i) => {
                                const n = String(i + 1).padStart(2, "0");
                                return (
                                  <Row key={m} $kind={i === 2 ? "on" : i % 2 ? "even" : "odd"}>
                                    <td />
                                    <td>{i === 2 ? <Edit><input defaultValue="A&J NARI SA" aria-label="Cliente" /></Edit> : "A&J NARI SA"}</td>
                                    <td>2019</td>
                                    <td>{n} {m}</td>
                                    <td><Check on label={`Libro presentado ${m}`} /></td>
                                    <td><Check on={i > 3} label={`Rubricado ${m}`} /></td>
                                    <td><Check on label={`Cd grabado ${m}`} /></td>
                                    <td />
                                  </Row>
                                );
                              })}
                              {[0, 1, 2].map((r) => (
                                <Row key={r} $kind="void">{columnWidths.map((w) => <td key={w} />)}</Row>
                              ))}
                            </tbody>
                          </Table>
                        </SheetView>
                        <HScroll>
                          <button type="button" aria-label="Izquierda"><svg width="5" height="8" viewBox="0 0 5 8"><path d="M5 0v8L0 4z" fill="#555" /></svg></button>
                          <HTrack />
                          <button type="button" aria-label="Derecha"><svg width="5" height="8" viewBox="0 0 5 8"><path d="M0 0v8l5-4z" fill="#555" /></svg></button>
                        </HScroll>
                      </Sheet>
                    </FormArea>
                  </FormBody>
                  <FormFoot />
                </FormWindow>
              </Workspace>
            </Body>
            <Status><span>Vista Formulario</span><span>Bloq Num</span><span>Filtrado</span></Status>
          </AccessWindow>
        </Front>
        <Behind>
          <BehindTop><svg width="6" height="11" viewBox="0 0 6 11" fill="none" stroke="#a9c3cf"><path d="M5 0L0 5.500 5 11" /></svg></BehindTop>
          <BehindBar>
            <svg width="4" height="14" viewBox="0 0 4 14" fill="#555"><circle cx="1" cy="2" r="1.700" /><circle cx="1" cy="7" r="1.700" /><circle cx="1" cy="12" r="1.700" /></svg>
            ra
          </BehindBar>
          <BehindPage>
            <BehindBlue />
            <VScroll>
              <svg width="8" height="4" viewBox="0 0 8 4"><path d="M4 0l4 4H0z" fill="#505050" /></svg>
              <VThumb />
              <svg width="8" height="4" viewBox="0 0 8 4"><path d="M4 4l4-4H0z" fill="#505050" /></svg>
            </VScroll>
          </BehindPage>
          <BehindFoot><svg width="11" height="11" viewBox="0 0 11 11" fill="none" stroke="#777" strokeWidth="2"><path d="M0 1l9 9M9 1l-9 9" /></svg></BehindFoot>
        </Behind>
      </Upper>

      <Taskbar>
        <TaskButton aria-label="Inicio"><svg width="17" height="16" viewBox="0 0 17 16" fill="#fff"><path d="M0 2l7-1v6.500H0zM8 1l9-1v7.500H8zM0 8.500h7V15l-7-1zM8 8.500h9V16l-9-1z" /></svg></TaskButton>
        <TaskSearch>
          <svg width="17" height="17" viewBox="0 0 17 17" fill="none" stroke="#222" strokeWidth="1.300"><circle cx="10.500" cy="6.500" r="5.500" /><path d="M6.500 10.500L1 16" /></svg>
          <input placeholder="Escribe aquí para buscar" />
        </TaskSearch>
        <Apps>
          <TaskButton aria-label="Cortana"><svg width="16" height="16" viewBox="0 0 16 16" fill="none" stroke="#fff" strokeWidth="2"><circle cx="8" cy="8" r="6.500" /></svg></TaskButton>
          <TaskButton aria-label="Vista de tareas"><svg width="20" height="16" viewBox="0 0 20 16" fill="none" stroke="#fff"><path d="M1.500 4.500h9v7h-9zM.500 0v2.500h11V0M.500 16v-2.500h11V16M15.500 0v3M15.500 9v7" /><path d="M14 4h3v3h-3z" fill="#fff" stroke="none" /></svg></TaskButton>
          <TaskButton $run aria-label="XX"><svg width="24" height="20" viewBox="0 0 24 20" fill="none" strokeWidth="3"><rect width="24" height="20" rx="7" fill="#1c1a19" /><path d="M13 6h3l5 8.500M21 5.500l-3.500 4.500-4 .500" stroke="#f59a1b" /><path d="M3.500 4.500l8.500 11M12 4.500l-8.500 11" stroke="#fff" strokeWidth="3.500" /></svg></TaskButton>
          <TaskButton aria-label="Explorador"><svg width="22" height="18" viewBox="0 0 22 18"><path d="M0 0h9l1 2h12v16H0z" fill="#fbc63c" /><path d="M0 0h9l1 2-1 1H0z" fill="#e19d12" /><path d="M1 5h20v7H1z" fill="#fdd975" /><path d="M4 18v-6q0-2 2-2h10q2 0 2 2v6h-4v-4H8v4z" fill="#3b97dd" /></svg></TaskButton>
          <TaskButton $run aria-label="Calculadora"><svg width="18" height="24" viewBox="0 0 18 24"><rect width="18" height="24" rx="1" fill="#7c8790" /><path d="M2 2h14v4H2z" fill="#39c8f2" /><path d="M2 8h4v4H2zM7 8h4v4H7zM12 8h4v4h-4zM2 13h4v4H2zM7 13h4v4H7zM2 18h4v4H2zM7 18h4v4H7z" fill="#cdd4da" /><path d="M12 13h4v9h-4z" fill="#154a8c" /></svg></TaskButton>
          <TaskButton $run aria-label="Chrome">
            <svg width="22" height="22" viewBox="0 0 22 22"><path d="M11 11L1.500 5.500A11 11 0 0 1 20.500 5.500L11 6z" fill="#dd4b3e" /><path d="M20.500 5.500A11 11 0 0 1 11 22l5-8.500L11 5.500z" fill="#fdce43" /><path d="M1.500 5.500A11 11 0 0 0 11 22l4.800-8.500L11 16 6 13z" fill="#1a9f5b" /><circle cx="11" cy="11" r="5.300" fill="#f4f4f4" /><circle cx="11" cy="11" r="4.200" fill="#4a8af4" /></svg>
          </TaskButton>
          <TaskButton aria-label="Editor">
            <svg width="22" height="24" viewBox="0 0 22 24"><path d="M1 2h14l3 3v18H1z" fill="#eef3ea" /><path d="M2 13h15v9H2z" fill="#8fdc3c" /><path d="M2 18h15v4H2z" fill="#3fae1e" /><path d="M2 2h13" stroke="#999" strokeDasharray="2 1" /><path d="M5.500 8v7M8 11.500h2M11 11.500h2M4 7.500h3.500v7H4" fill="none" stroke="#333" /><path d="M12 18l8-16 2 1-8 15z" fill="#eba52a" /><path d="M19 3l1-2 2 1-1 2z" fill="#d33" /></svg>
          </TaskButton>
          <TaskButton $run $on aria-label="Access">
            <svg width="23" height="23" viewBox="0 0 23 23"><path d="M12 4h10v15H12z" fill="#a4373a" /><path d="M13 5q5-2 9 0v3q-4 2-9 0zM13 9q5 2 9 0v3q-4 2-9 0zM13 14q5 2 9 0v3q-4 2-9 0z" fill="#fff" /><path d="M0 2l13-2v23L0 20z" fill="#a8353a" /><text x="2" y="16" fontSize="13" fontWeight="700" fontFamily="Liberation Sans" fill="#fff">A</text></svg>
          </TaskButton>
        </Apps>
        <Tray>
          <TrayButton aria-label="Mostrar ocultos"><svg width="12" height="8" viewBox="0 0 12 8" fill="none" stroke="#fff" strokeWidth="1.300"><path d="M1 7l5-5 5 5" /></svg></TrayButton>
          <TrayButton aria-label="Batería"><svg width="16" height="11" viewBox="0 0 16 11" fill="none" stroke="#ddd"><path d="M6 2.500h8.500v7H4M15.500 5v2M1 3h4v2q0 1.500-2 1.500T1 5zM2 0v3M4 0v3M3 6.500V10M7 4l4 4M11 4L7 8" /></svg></TrayButton>
          <TrayButton aria-label="Red"><svg width="14" height="13" viewBox="0 0 14 13" fill="none" stroke="#ddd"><path d="M1 12A11 11 0 0 1 12 1M4 12.500A8 8 0 0 1 12 4.500M7 12.500A5 5 0 0 1 12 7.500" /><circle cx="11" cy="11" r="1.500" fill="#fff" stroke="none" /></svg></TrayButton>
          <TrayButton aria-label="Volumen"><svg width="17" height="13" viewBox="0 0 17 13" fill="none" stroke="#ddd"><path d="M1 4.500h2L6.500 1v11L3 8.500H1zM8.500 4q2 2.500 0 5M11 2.500q3 4 0 8M13.500 1q4 5.500 0 11" /></svg></TrayButton>
          <Clock>1:11<br />25/05/2021</Clock>
          <Notice aria-label="Notificaciones">
            <svg width="26" height="24" viewBox="0 0 26 24"><path d="M1 1h16v12H9l-3 3v-3H1z" fill="#fff" /><path d="M3 4.500h12M3 7.500h12M3 10.500h7" stroke="#1b2842" /><circle cx="17" cy="15.500" r="7.500" fill="#3a3f48" stroke="#8a9099" /><text x="14" y="20" fontSize="12" fontWeight="700" fontFamily="Open Sans" fill="#fff">2</text></svg>
          </Notice>
          <ShowDesktop aria-label="Mostrar escritorio" />
        </Tray>
      </Taskbar>
    </Screen>
  );
}
